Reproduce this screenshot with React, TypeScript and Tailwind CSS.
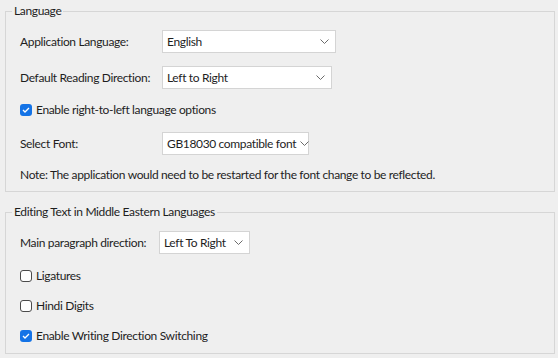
import { useState } from 'react'

interface SelectBoxProps {
  value: string
  width: string
}

/** Flat dropdown box with a thin chevron on the right */
function SelectBox({ value, width }: SelectBoxProps) {
  return (
    <div
      className={`${width} h-[23px] flex-shrink-0 flex items-center justify-between bg-white border border-[#d4d4d4] pl-[4px] pr-[6px]`}
    >
      <span className="whitespace-nowrap">{value}</span>
      <svg width="9" height="5" viewBox="0 0 9 5" className="flex-shrink-0 ml-[4px]">
        <path d="M0.5 0.5 L4.5 4.5 L8.5 0.5" fill="none" stroke="#6b6b6b" strokeWidth="1" />
      </svg>
    </div>
  )
}

interface CheckRowProps {
  label: string
  checked: boolean
  onToggle: () => void
  className?: string
}

function CheckRow({ label, checked, onToggle, className = '' }: CheckRowProps) {
  return (
    <button
      type="button"
      onClick={onToggle}
      className={`h-[20px] flex items-center gap-[4px] text-left cursor-pointer whitespace-nowrap ${className}`}
    >
      {checked ? (
        <span className="w-[12px] h-[12px] rounded-[3px] bg-[#1473e6] flex items-center justify-center">
          <svg width="8" height="6" viewBox="0 0 8 6">
            <path d="M1 3 L3 5 L7 1" fill="none" stroke="white" strokeWidth="1.3" />
          </svg>
        </span>
      ) : (
        <span className="w-[12px] h-[12px] rounded-[3px] bg-white border border-[#4b4b4b]" />
      )}
      <span>{label}</span>
    </button>
  )
}

export default function App() {
  const [rtlOptions, setRtlOptions] = useState(true)
  const [ligatures, setLigatures] = useState(false)
  const [hindiDigits, setHindiDigits] = useState(false)
  const [dirSwitching, setDirSwitching] = useState(true)

  return (
    <div className="w-[558px] h-[358px] bg-[#efefef] text-[12px] leading-[16px] tracking-[-0.35px] text-[#1e1e1e] font-['Lato',sans-serif] px-[5px] pt-[3px]">
      {/* Language */}
      <fieldset className="w-[550px] border border-[#d6d6d6] pl-[14px] pb-[8px]">
        <legend className="-ml-[8px] px-[2px]">Language</legend>

        <div className="flex flex-col">
          <div className="mt-[11px] flex items-center">
            <span className="w-[142px] whitespace-nowrap">Application Language:</span>
            <SelectBox value="English" width="w-[174px]" />
          </div>

          <div className="mt-[13px] flex items-center">
            <span className="w-[142px] whitespace-nowrap">Default Reading Direction:</span>
            <SelectBox value="Left to Right" width="w-[170px]" />
          </div>

          <CheckRow
            className="mt-[11px]"
            label="Enable right-to-left language options"
            checked={rtlOptions}
            onToggle={() => setRtlOptions(v => !v)}
          />

          <div className="mt-[12px] flex items-center">
            <span className="w-[142px] whitespace-nowrap">Select Font:</span>
            <SelectBox value="GB18030 compatible font" width="w-[147px]" />
          </div>

          <p className="mt-[12px] whitespace-nowrap">
            Note: The application would need to be restarted for the font change to be reflected.
          </p>
        </div>
      </fieldset>

      {/* Middle Eastern text editing */}
      <fieldset className="mt-[12px] w-[550px] border border-[#d6d6d6] pl-[14px] pb-[7px]">
        <legend className="-ml-[8px] px-[2px]">Editing Text in Middle Eastern Languages</legend>

        <div className="flex flex-col">
          <div className="mt-[11px] flex items-center">
            <span className="w-[139px] whitespace-nowrap">Main paragraph direction:</span>
            <SelectBox value="Left To Right" width="w-[91px]" />
          </div>

          <CheckRow
            className="mt-[12px]"
            label="Ligatures"
            checked={ligatures}
            onToggle={() => setLigatures(v => !v)}
          />
          <CheckRow
            className="mt-[10px]"
            label="Hindi Digits"
            checked={hindiDigits}
            onToggle={() => setHindiDigits(v => !v)}
          />
          <CheckRow
            className="mt-[10px]"
            label="Enable Writing Direction Switching"
            checked={dirSwitching}
            onToggle={() => setDirSwitching(v => !v)}
          />
        </div>
      </fieldset>
    </div>
  )
}
